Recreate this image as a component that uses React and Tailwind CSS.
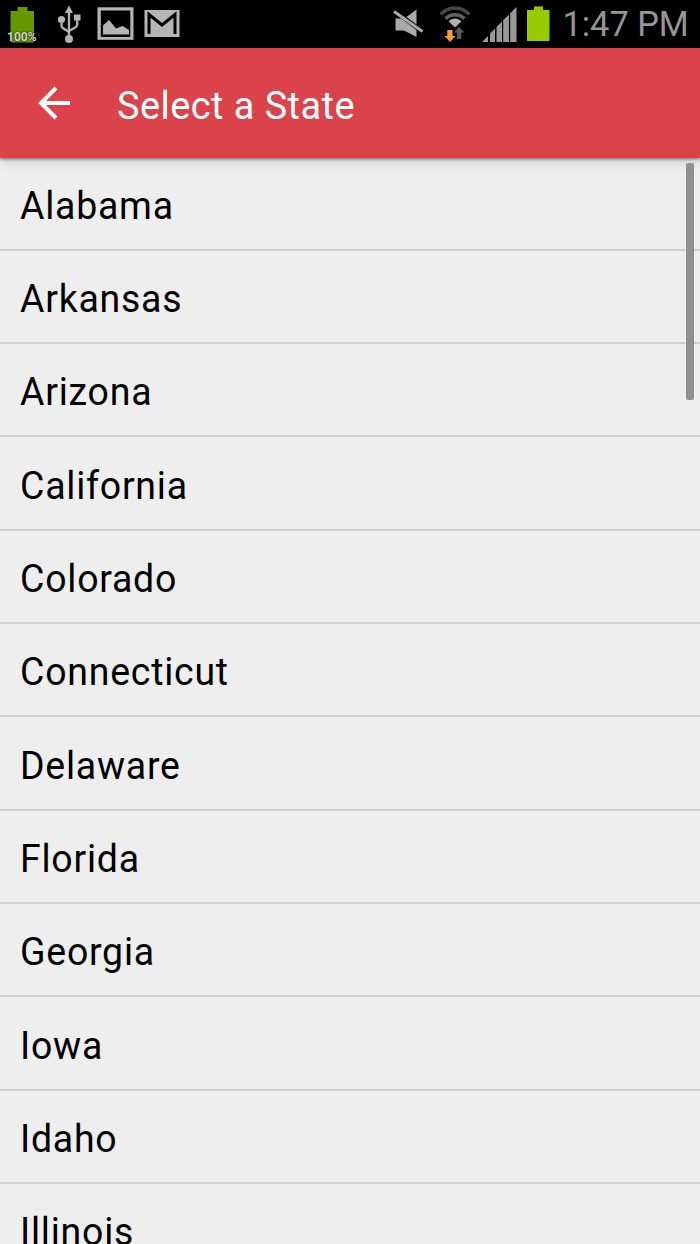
import React from 'react'

const STATES = [
  'Alabama',
  'Arkansas',
  'Arizona',
  'California',
  'Colorado',
  'Connecticut',
  'Delaware',
  'Florida',
  'Georgia',
  'Iowa',
  'Idaho',
  'Illinois',
]

function BatteryFullIcon() {
  return (
    <div className="relative ml-[6px] w-8 h-12 shrink-0">
      <svg className="block" width="32" height="48" viewBox="0 0 32 48" fill="#669900">
        <path d="M11.500 7h10v4H28v31.500H4.500V11h7z" />
      </svg>
      <span className="absolute left-[1px] top-[30px] text-[12px] leading-[14px] font-bold text-[#d0d0d0] [text-shadow:0_0_2px_#000]">100%</span>
    </div>
  )
}

function UsbIcon() {
  return (
    <svg className="ml-[18px] shrink-0" width="28" height="48" viewBox="0 0 28 48" fill="#b4b4b4">
      <path d="M13 5.500l4 7.500H9z" />
      <rect x="18" y="14.500" width="6.500" height="6" />
      <circle cx="5.500" cy="19.500" r="3.600" />
      <circle cx="13" cy="39" r="4" />
      <path d="M13 10v28M5.500 20v5.500q0 2 2 3L13 32M21.200 20v4.500q0 2-2 3L13 31" fill="none" stroke="#b4b4b4" strokeWidth="2.300" />
    </svg>
  )
}

function PictureIcon() {
  return (
    <svg className="ml-[13px] shrink-0" width="37" height="48" viewBox="0 0 37 48">
      <rect x="0.500" y="7.300" width="36" height="32.500" fill="#b5b5b5" />
      <rect x="3.800" y="10.500" width="29.500" height="26.500" fill="#000" />
      <path d="M6 34.500v-9l6-5.500 7 8.500 6.500-2.500 6.500 4v4.500z" fill="#b5b5b5" />
    </svg>
  )
}

function GmailIcon() {
  return (
    <svg className="ml-[10px] shrink-0" width="36" height="48" viewBox="0 0 36 48">
      <rect x="0.500" y="10" width="35" height="27" fill="#b5b5b5" />
      <path d="M5 34V14.500l13 10.500 13-10.500V34" fill="none" stroke="#000" strokeWidth="3" />
    </svg>
  )
}

function MutedIcon() {
  return (
    <svg className="shrink-0" width="32" height="48" viewBox="0 0 32 48" fill="#aaa">
      <path d="M3.500 18.500H9L24.500 30v7L12 30.500H3.500z" />
      <path d="M14.500 17l10-7.500v15z" />
      <path d="M2 11.500L30.500 31.500" stroke="#aaa" strokeWidth="2.800" />
    </svg>
  )
}

function WifiIcon() {
  return (
    <svg className="ml-[15px] shrink-0" width="34" height="48" viewBox="0 0 34 48">
      <g fill="none" strokeWidth="3.600">
        <path d="M1.800 14.400A19 19 0 0 1 30.200 14.400" stroke="#474747" />
        <path d="M6.700 18.600A13.300 13.300 0 0 1 25.300 18.600" stroke="#626262" />
      </g>
      <path d="M9.500 21.200a9.300 9.300 0 0 1 13 0L16 27.500z" fill="#b0b0b0" />
      <path d="M8.300 30h5.200v6h3L11 42l-5.500-6h2.800z" fill="#f9a02c" />
      <path d="M17.800 39h4.500v-6.500h3.200L20 27l-5 5.500h2.800z" fill="#5a5a5a" />
    </svg>
  )
}

function SignalIcon() {
  return (
    <svg className="ml-[8px] shrink-0" width="36" height="48" viewBox="0 0 36 48" fill="#999">
      <path d="M1 42l6-6v6zM9 42v-8.500l5-5V42zM15.500 42V27l5.500-5.500V42zM22.200 42V20.200l5.800-5.700V42zM29.200 42V13.200L35.500 7v35z" />
    </svg>
  )
}

function StatusBar() {
  return (
    <div className="flex h-12 shrink-0 items-center bg-black">
      <BatteryFullIcon />
      <UsbIcon />
      <PictureIcon />
      <GmailIcon />
      <div className="ml-auto flex items-center pr-[13px]">
        <MutedIcon />
        <WifiIcon />
        <SignalIcon />
        <svg className="ml-[9px] shrink-0" width="24" height="48" viewBox="0 0 24 48" fill="#99cc00">
          <path d="M8 6.500h9V10h6.500v31H1V10h7z" />
        </svg>
        <span className="ml-[10px] w-[127px] origin-right scale-x-[0.98] whitespace-nowrap pt-[2px] text-[35px] leading-[46px] text-[#969696]">1:47 PM</span>
      </div>
    </div>
  )
}

function Header() {
  return (
    <header className="relative z-10 flex h-[109.500px] shrink-0 items-center bg-[#db434a] shadow-[0_1px_3px_rgba(0,0,0,0.5),0_5px_10px_rgba(0,0,0,0.12)]">
      <svg className="ml-[38px] shrink-0" width="34" height="34" viewBox="0 0 34 34" fill="none" stroke="#fff" strokeWidth="4">
        <path d="M32 17H4M18 2L3 17l15 15" />
      </svg>
      <h1 className="ml-[45px] origin-left scale-x-[0.97] pt-[6px] text-[39px] leading-[48px] font-normal tracking-[0.5px] text-white">Select a State</h1>
    </header>
  )
}

export default function App() {
  return (
    <div className="relative flex h-[1244px] w-[700px] flex-col overflow-hidden bg-[#eee] font-['Roboto',sans-serif]">
      <StatusBar />
      <Header />
      <ul className="min-h-0 flex-1 overflow-hidden">
        {STATES.map((name) => (
          <li key={name} className="flex h-[93.330px] items-center border-b-2 border-[#d0d0d0] pl-5 text-[39px] leading-[48px] text-black">
            <span className="origin-left scale-x-[0.96] pt-[5px] tracking-[0.8px]">{name}</span>
          </li>
        ))}
      </ul>
      {/* Scroll thumb */}
      <div className="absolute right-[6px] top-[163px] z-20 h-[237px] w-[8px] rounded-[2px] bg-[#909090]" />
    </div>
  )
}
